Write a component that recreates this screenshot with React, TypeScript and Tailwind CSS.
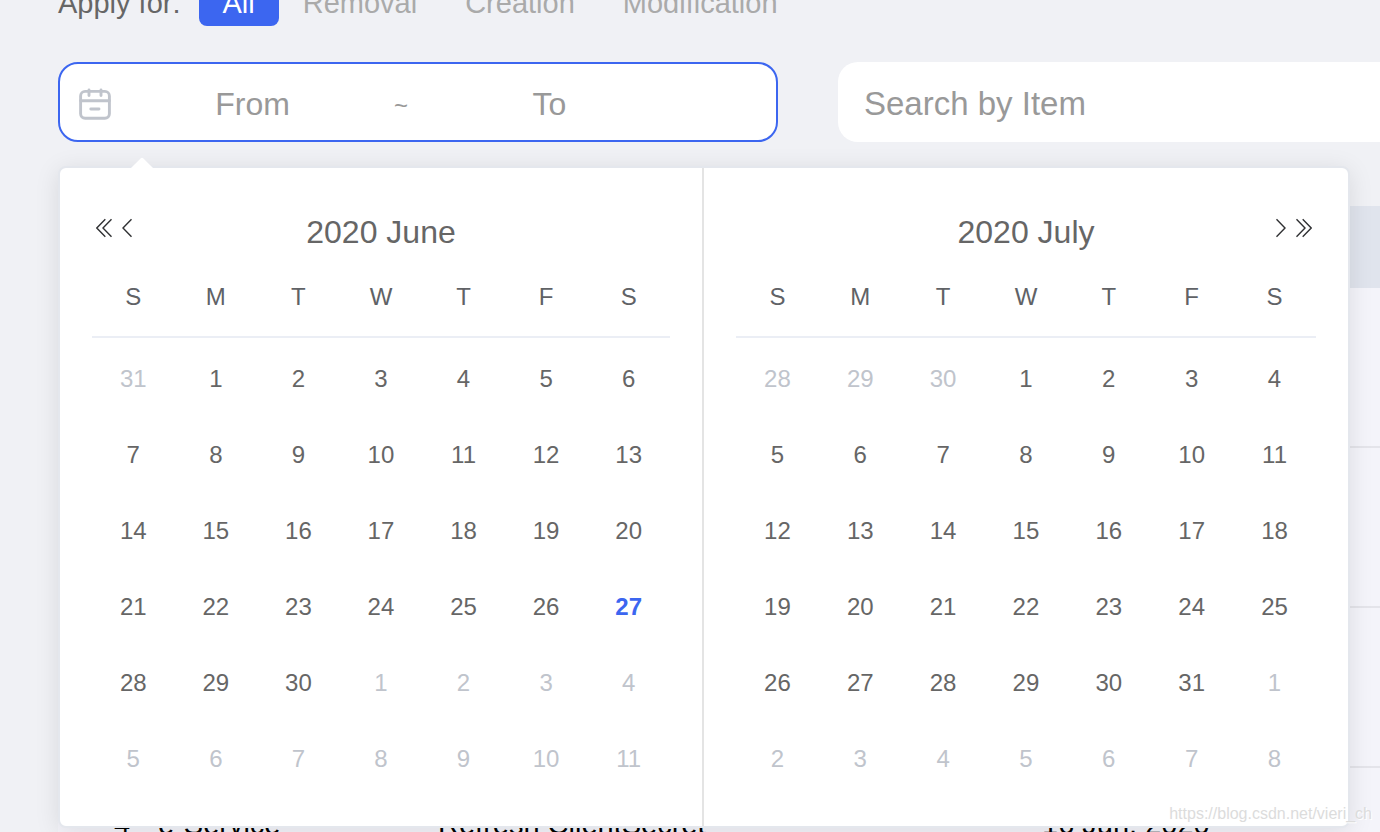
import { useState } from "react";
import clsx from "clsx";

const FILTERS = ["All", "Removal", "Creation", "Modification"];

const WEEKDAYS = ["S", "M", "T", "W", "T", "F", "S"];
const DAY_NAMES = ["Sunday", "Monday", "Tuesday", "Wednesday", "Thursday", "Friday", "Saturday"];

const TODAY = new Date(2020, 5, 27);

// month is zero based, like Date
const MONTHS = [
  { title: "2020 June", year: 2020, month: 5 },
  { title: "2020 July", year: 2020, month: 6 },
];

const ROWS = [
  { no: "", item: "", action: "", date: "" },
  { no: "", item: "", action: "", date: "" },
  { no: "", item: "", action: "", date: "" },
  { no: "4", item: "e-Service", action: "Refresh ClientSecret", date: "16 Jun, 2020" },
];

// always six full weeks, padded with days of the months around it
function getWeeks(year: number, month: number) {
  const offset = new Date(year, month, 1).getDay();
  return Array.from({ length: 6 }, (_, w) =>
    Array.from({ length: 7 }, (_, d) => new Date(year, month, 1 - offset + w * 7 + d))
  );
}

function CalendarIcon() {
  return (
    <svg className="size-8 shrink-0 text-[#c0c4cc]" viewBox="0 0 32 32" fill="none" stroke="currentColor" strokeWidth="2.9" strokeLinecap="round" aria-hidden="true">
      <rect x="1.6" y="3.4" width="28.8" height="26.8" rx="4.5" />
      <path d="M1.6 12.8h28.8M10 2v5.6M22 2v5.6M11.8 21h8.2" />
    </svg>
  );
}

function Single({ flip }: { flip?: boolean }) {
  return (
    <svg className={clsx("h-5 w-2.5", flip && "-scale-x-100")} viewBox="0 0 10 20" fill="none" stroke="#303133" strokeWidth="1.4" aria-hidden="true">
      <path d="M9.5 1.3 1 10l8.5 8.7" />
    </svg>
  );
}

function Double({ flip }: { flip?: boolean }) {
  return (
    <svg className={clsx("h-5 w-4", flip && "-scale-x-100")} viewBox="0 0 16 20" fill="none" stroke="#303133" strokeWidth="1.4" aria-hidden="true">
      <path d="M9.3 1.3.8 10l8.5 8.7M15.5 1.3 7 10l8.5 8.7" />
    </svg>
  );
}

function Month({ title, year, month, side }: { title: string; year: number; month: number; side: "left" | "right" }) {
  return (
    <section className={clsx("p-8", side === "left" && "border-r-2 border-[#e4e4e4]")}>
      <header className="grid h-16 grid-cols-[1fr_auto_1fr] items-center">
        <div className="mb-2 flex gap-2.5 pl-1">
          {side === "left" && (
            <>
              <button type="button" aria-label="Previous year"><Double /></button>
              <button type="button" aria-label="Previous month"><Single /></button>
            </>
          )}
        </div>
        <h2 className="text-[32px] leading-10 text-[#666]">{title}</h2>
        <div className="mb-2 flex justify-end gap-2.5 pr-1">
          {side === "right" && (
            <>
              <button type="button" aria-label="Next month"><Single flip /></button>
              <button type="button" aria-label="Next year"><Double flip /></button>
            </>
          )}
        </div>
      </header>
      <table className="w-full table-fixed border-separate border-spacing-0 text-2xl" aria-label={title}>
        <thead>
          <tr>
            {WEEKDAYS.map((d, i) => (
              <th key={i} scope="col" abbr={DAY_NAMES[i]} className="h-[74px] border-b-2 border-[#ebeef5] p-0 pb-1.5 text-center font-normal text-[#606266]">
                {d}
              </th>
            ))}
          </tr>
        </thead>
        <tbody>
          {getWeeks(year, month).map((week, w) => (
            <tr key={w}>
              {week.map((day) => {
                const outside = day.getMonth() !== month;
                const today = !outside && day.getTime() === TODAY.getTime();
                return (
                  <td key={day.getTime()} className="h-[76px] p-0 pt-1.5 text-center">
                    <button
                      type="button"
                      className={clsx(
                        "h-12 w-full",
                        outside ? "text-[#c0c4cc]" : today ? "font-bold text-[#3c66f0]" : "text-[#666]"
                      )}
                    >
                      {day.getDate()}
                    </button>
                  </td>
                );
              })}
            </tr>
          ))}
        </tbody>
      </table>
    </section>
  );
}

export default function App() {
  const [filter, setFilter] = useState("All");
  const [from, setFrom] = useState("");
  const [to, setTo] = useState("");

  return (
    <main className="relative h-screen overflow-hidden bg-[#f0f1f5] pl-[58px] font-['Liberation_Sans',Arial,sans-serif]">
      {/* filters, scrolled half out of view */}
      <div className="-mt-5 flex h-[46px] items-center pt-0.5 text-[29px]">
        <span className="mr-[18px] text-[#666]">Apply for:</span>
        {FILTERS.map((f) => (
          <button
            key={f}
            type="button"
            aria-pressed={filter === f}
            onClick={() => setFilter(f)}
            className={clsx("h-full rounded-lg px-6", filter === f ? "bg-[#3c66f0] text-white" : "text-[#aaa]")}
          >
            {f}
          </button>
        ))}
      </div>

      <div className="relative mt-9 flex gap-[60px]">
        <div className="flex h-20 w-[720px] shrink-0 items-center rounded-[20px] border-2 border-[#3c66f0] bg-white pt-1 pr-[87px] pl-[19px] text-[32px]">
          <CalendarIcon />
          <input
            aria-label="From date"
            placeholder="From"
            value={from}
            onChange={(e) => setFrom(e.target.value)}
            className="ml-0.5 h-full min-w-0 flex-1 text-center text-[#666] outline-none placeholder:text-[#999]"
          />
          <span className="w-[18px] pt-1 text-center text-2xl text-[#999]">~</span>
          <input
            aria-label="To date"
            placeholder="To"
            value={to}
            onChange={(e) => setTo(e.target.value)}
            className="h-full min-w-0 flex-1 text-center text-[#666] outline-none placeholder:text-[#999]"
          />
        </div>
        <input
          type="text"
          aria-label="Search by Item"
          placeholder="Search by Item"
          className="h-20 min-w-0 flex-1 rounded-l-[20px] bg-white px-[26px] pt-1 text-[33px] text-[#666] outline-none placeholder:text-[#999]"
        />

        {/* range popover */}
        <div className="absolute top-full right-[30px] left-0 z-10 mt-6 grid grid-cols-2 rounded-lg border-2 border-[#e4e7ed] bg-white shadow-[0_4px_24px_rgba(0,0,0,0.1)]">
          <svg className="absolute -top-3 left-[70px] h-3 w-6" viewBox="0 0 24 12" aria-hidden="true">
            <path d="M1 12 10.6 2.4q1.4-1.3 2.8 0L23 12z" fill="#fff" />
          </svg>
          <Month {...MONTHS[0]} side="left" />
          <Month {...MONTHS[1]} side="right" />
        </div>
      </div>

      <table className="mt-16 w-full table-fixed border-separate border-spacing-0 text-left text-[29px] leading-10 text-black" aria-label="Applications">
        <colgroup>
          <col className="w-[100px]" />
          <col className="w-[280px]" />
          <col className="w-[604px]" />
          <col />
        </colgroup>
        <thead>
          <tr className="h-[82px] bg-[#e0e4ed]">
            <th scope="col" />
            <th scope="col" />
            <th scope="col" />
            <th scope="col" />
          </tr>
        </thead>
        <tbody>
          {ROWS.map((r, i) => (
            <tr key={i} className="h-40 bg-[#f4f4fa] align-top *:border-b-2 *:border-[#e4e4ea] *:p-0 *:pt-9">
              <td><span className="ml-14">{r.no}</span></td>
              <td>{r.item}</td>
              <td>{r.action}</td>
              <td>{r.date}</td>
            </tr>
          ))}
        </tbody>
      </table>

      <span className="pointer-events-none absolute right-2 bottom-1.5 z-20 text-base leading-6 text-[#dcdcdc] [text-shadow:1px_1px_0_#fff]">
        https://blog.csdn.net/vieri_ch
      </span>
    </main>
  );
}
